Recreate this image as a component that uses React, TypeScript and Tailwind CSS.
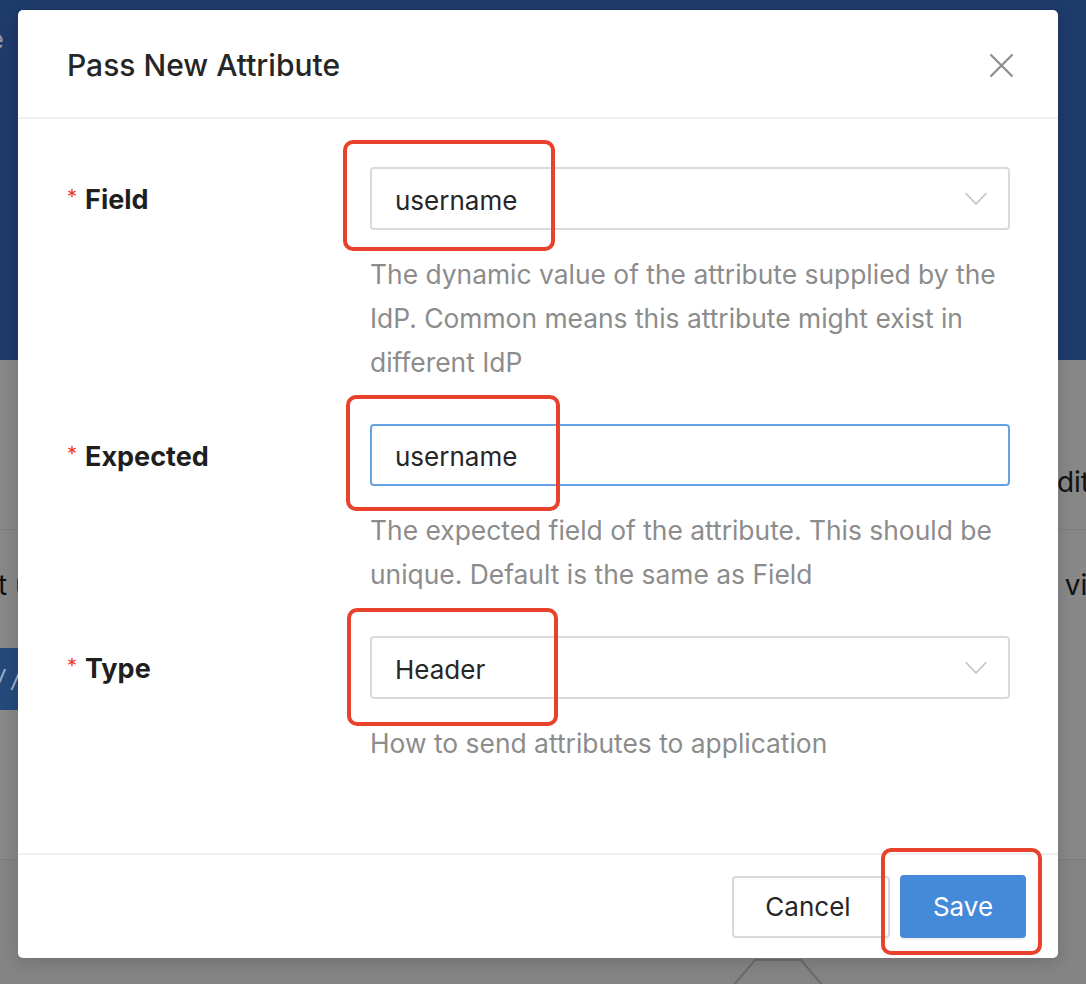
const FONT = { fontFamily: 'Inter, "Noto Sans", sans-serif' };

function Chevron() {
    return (
        <svg width="22" height="14" viewBox="0 0 22 14" fill="none" className="shrink-0">
            <path d="M1 1.5 L11 12 L21 1.5" stroke="#c2c2c2" strokeWidth="1.6" strokeLinecap="round" strokeLinejoin="round" />
        </svg>
    );
}

function CloseIcon() {
    return (
        <svg width="25" height="25" viewBox="0 0 25 25" fill="none">
            <path d="M1.5 1.5 L23.5 23.5 M23.5 1.5 L1.5 23.5" stroke="#8c8c8c" strokeWidth="2.2" strokeLinecap="butt" />
        </svg>
    );
}

function Annotation({ className }: { className: string }) {
    return <div className={`absolute border-[4px] border-[#e8412c] rounded-[10px] pointer-events-none ${className}`} />;
}

type ItemProps = {
    label: string;
    value: string;
    help: string[];
    kind: 'select' | 'input';
    last?: boolean;
};

function FormItem({ label, value, help, kind, last }: ItemProps) {
    return (
        <div className={`flex ${last ? '' : 'mb-[40px]'}`}>
            <div className="w-[303px] h-[63px] flex items-center shrink-0 pt-[3px]">
                <span className="text-[20px] text-[#ee3a2c] mr-[8px] -mt-[6px] leading-none">*</span>
                <span className="text-[27px] font-bold text-[#1f1f1f]">{label}</span>
            </div>
            <div className="flex-1 min-w-0">
                {kind === 'select' ? (
                    <div className="h-[63px] rounded-[4px] border-2 border-[#dadada] flex items-center justify-between pl-[23px] pr-[21px]">
                        <span className="text-[26px] text-[#262626] pt-[3px]">{value}</span>
                        <Chevron />
                    </div>
                ) : (
                    <div className="h-[62px] rounded-[4px] border-2 border-[#66a3e3] flex items-center pl-[23px]">
                        <span className="text-[26px] text-[#262626] pt-[3px]">{value}</span>
                    </div>
                )}
                <div className="mt-[22px] text-[26.4px] leading-[44px] text-[#8c8c8c]">
                    {help.map(line => (
                        <div key={line} className="whitespace-nowrap">{line}</div>
                    ))}
                </div>
            </div>
        </div>
    );
}

export default function App() {
    return (
        <div className="relative w-[1086px] h-[984px] overflow-hidden bg-[#878787]" style={FONT}>
            {/* page behind the mask */}
            <div className="flex flex-col h-full">
                <div className="h-[360px] bg-[#1f3b6b] shrink-0">
                    <div className="pt-[20px] -ml-[26px] text-[26px] text-[#8e97a8]">Le</div>
                </div>
                <div className="h-[170px] border-b border-[#7d7d7d] flex items-end justify-end pb-[26px] overflow-hidden">
                    <span className="text-[28px] text-[#111] -mr-[4px] whitespace-nowrap">Edit</span>
                </div>
                <div className="h-[330px] border-b border-[#7b7b7b] flex flex-col overflow-hidden">
                    <div className="flex justify-between items-center h-[110px]">
                        <span className="text-[28px] text-[#111] -ml-[40px] whitespace-nowrap">just u</span>
                        <span className="text-[28px] text-[#111] -mr-[40px] whitespace-nowrap">view</span>
                    </div>
                    <div className="mt-[8px] w-[60px] h-[62px] -ml-[42px] bg-[#24497a] flex items-center overflow-hidden">
                        <span className="text-[24px] text-[#9fb3cf] italic pl-[38px] whitespace-nowrap">/ /</span>
                    </div>
                </div>
                <div className="flex-1 bg-[#848484] relative">
                    <svg className="absolute left-[730px] top-[96px]" width="96" height="30" viewBox="0 0 96 30" fill="none">
                        <path d="M3 30 L25 4 L71 4 L93 30" stroke="#6b6b6b" strokeWidth="2" />
                    </svg>
                </div>
            </div>

            {/* modal */}
            <div className="absolute inset-0 pt-[10px] pl-[18px]">
                <div className="w-[1040px] h-[948px] bg-white rounded-[5px] shadow-[0_4px_16px_rgba(0,0,0,0.15)] flex flex-col">
                    <div className="h-[109px] border-b-2 border-[#f0f0f0] flex items-center justify-between pl-[49px] pr-[44px] pt-[3px] shrink-0">
                        <span className="text-[30px] font-medium text-[#262626]">Pass New Attribute</span>
                        <CloseIcon />
                    </div>
                    <div className="flex-1 pt-[48px] pl-[49px] pr-[48px]">
                        <FormItem
                            label="Field"
                            value="username"
                            kind="select"
                            help={[
                                'The dynamic value of the attribute supplied by the',
                                'IdP. Common means this attribute might exist in',
                                'different IdP',
                            ]}
                        />
                        <FormItem
                            label="Expected"
                            value="username"
                            kind="input"
                            help={[
                                'The expected field of the attribute. This should be',
                                'unique. Default is the same as Field',
                            ]}
                        />
                        <FormItem
                            label="Type"
                            value="Header"
                            kind="select"
                            last
                            help={['How to send attributes to application']}
                        />
                    </div>
                    <div className="h-[105px] border-t-2 border-[#f0f0f0] flex items-center justify-end gap-[10px] pr-[32px] shrink-0">
                        <button className="w-[158px] h-[62px] rounded-[4px] border-2 border-[#d9d9d9] bg-white text-[26px] text-[#262626] pr-[6px] shadow-[0_2px_0_rgba(0,0,0,0.02)]">
                            Cancel
                        </button>
                        <button className="w-[126px] h-[63px] rounded-[4px] bg-[#4589d9] text-[26px] text-white shadow-[0_2px_0_rgba(0,0,0,0.05)]">
                            Save
                        </button>
                    </div>
                </div>
            </div>

            {/* red annotation boxes */}
            <Annotation className="left-[343px] top-[140px] w-[212px] h-[111px]" />
            <Annotation className="left-[346px] top-[395px] w-[214px] h-[116px]" />
            <Annotation className="left-[347px] top-[608px] w-[211px] h-[118px]" />
            <Annotation className="left-[881px] top-[848px] w-[161px] h-[107px]" />
        </div>
    );
}
